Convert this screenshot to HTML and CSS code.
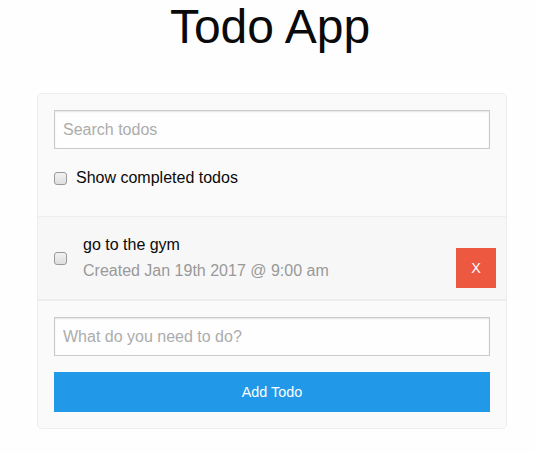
FILE: index.html
```html
<!DOCTYPE html>
<html>
<head>
<meta charset="utf-8">
<link rel="stylesheet" href="styles.css">
</head>
<body>
  <h1 class="page-title">Todo App</h1>
  <main class="app">
    <section class="container">
      <div class="search">
        <input class="field" type="search" placeholder="Search todos">
        <label class="toggle">
          <input class="check" type="checkbox">
          <span>Show completed todos</span>
        </label>
      </div>
      <div class="todo">
        <input class="check" type="checkbox">
        <div class="todo__text">
          <p class="todo__title">go to the gym</p>
          <p class="todo__sub">Created Jan 19th 2017 @ 9:00 am</p>
        </div>
        <button class="btn btn--alert" type="button">X</button>
      </div>
      <form class="footer">
        <input class="field" type="text" placeholder="What do you need to do?">
        <button class="btn btn--primary btn--expanded" type="button">Add Todo</button>
      </form>
    </section>
  </main>
</body>
</html>
```
FILE: styles.css
```css
* { box-sizing: border-box; }

body {
  margin: 0;
  background: #fefefe;
  color: #0a0a0a;
  font-family: "Liberation Sans", Arial, sans-serif;
  font-size: 16px;
  line-height: 1.6;
}

.page-title {
  margin: 0 0 42px;
  padding: 3px 0 0 5px;
  font-size: 48px;
  font-weight: normal;
  line-height: 48px;
  text-align: center;
}

.app {
  padding: 0 28px 0 37px;
}

.container {
  background: #fafafa;
  border: 1px solid #eeeeee;
  border-radius: 5px;
}

.search {
  padding: 16px 16px 16px;
  border-bottom: 1px solid #eeeeee;
}

.field {
  display: block;
  width: 100%;
  height: 39px;
  margin: 0 0 16px;
  padding: 8px;
  border: 1px solid #cacaca;
  border-radius: 0;
  background: #fefefe;
  box-shadow: inset 0 1px 2px rgba(10, 10, 10, 0.1);
  font-family: inherit;
  font-size: 16px;
  color: #0a0a0a;
  -webkit-appearance: none;
  appearance: none;
}

.field::placeholder { color: #acacac; }

.toggle {
  display: flex;
  align-items: center;
  gap: 9px;
  margin-bottom: 9px;
  line-height: 26px;
}

.check {
  -webkit-appearance: none;
  appearance: none;
  flex: none;
  width: 13px;
  height: 13px;
  margin: 0;
  border: 1px solid #9a9a9a;
  border-radius: 3px;
  background: linear-gradient(#f2f2f2, #dedede);
}

.todo {
  display: flex;
  align-items: center;
  gap: 16px;
  padding: 15px 10px 15px 16px;
  background: #f7f7f7;
  border-bottom: 1px solid #eeeeee;
}

.todo__text { flex: 1; }

.todo__title, .todo__sub {
  margin: 0;
  line-height: 25.6px;
}

.todo__sub { color: #999999; }

.btn {
  border: 0;
  border-radius: 0;
  color: #fefefe;
  font-family: inherit;
  font-size: 14.4px;
  line-height: 1;
  cursor: pointer;
}

.btn--alert {
  align-self: flex-start;
  width: 40px;
  height: 40px;
  margin: 16px 0 -4px;
  padding: 0;
  background: #ec5840;
}

.footer {
  margin: 0;
  padding: 16px;
  border-top: 1px solid #eeeeee;
}

.btn--primary { background: #2199e8; }

.btn--expanded {
  display: block;
  width: 100%;
  height: 40px;
}
```
